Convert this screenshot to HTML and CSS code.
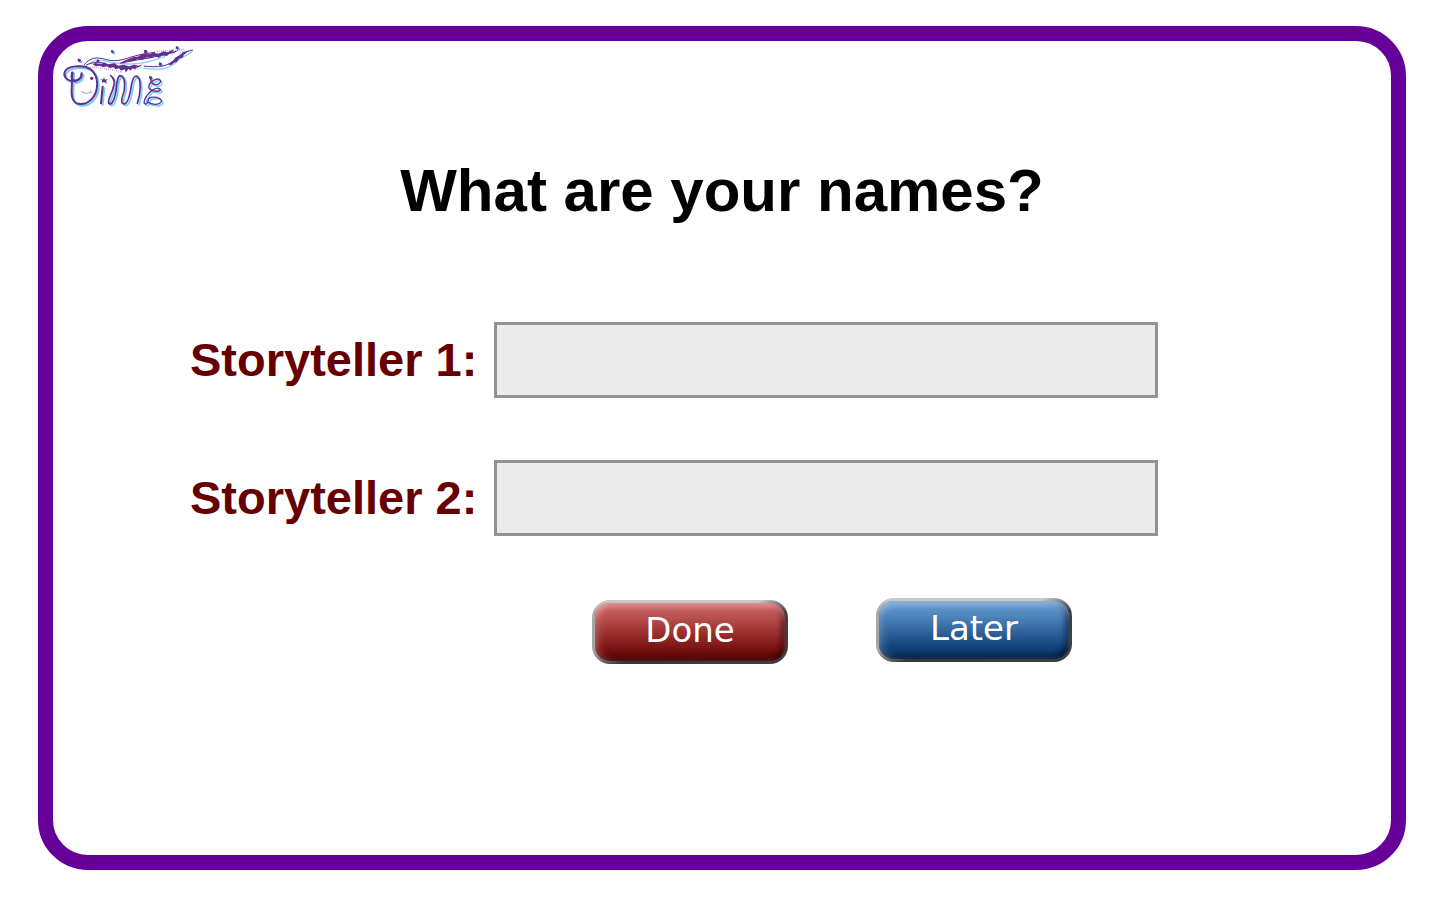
FILE: index.html
```html
<!DOCTYPE html>
<html lang="en">
<head>
<meta charset="utf-8">
<title>What are your names?</title>
<link rel="stylesheet" href="styles.css">
</head>
<body>
<main class="frame">
  <header class="brand">
    <svg class="logo" viewBox="0 3 435 216" role="img" aria-label="Dime">
      <defs>
        <g id="letters" fill="none" stroke-linecap="round" stroke-linejoin="round">
          <path stroke-width="7" d="M52 98 C48 112 50 124 62 122 C74 120 80 112 80 100"/>
          <path stroke-width="6" d="M62 124 C42 124 28 116 28 102 C29 84 52 77 78 79 C112 81 129 105 126 140 C124 168 103 192 78 192 C54 193 49 172 50 150 L52 98"/>
          <path stroke-width="6" d="M143 140 L138 190"/>
          <path stroke-width="5" d="M167 107 C181 116 180 132 172 152 C163 174 156 190 164 192 C174 194 180 170 183 154 C186 130 186 108 196 107 C212 108 212 146 203 168 C197 184 200 192 208 192 C220 190 224 166 227 150 C230 126 234 108 244 108 C260 112 258 160 247 190"/>
          <path stroke-width="4" d="M287 113 C286 130 296 136 308 133 C324 126 316 114 302 118 C284 124 276 142 286 149 C300 156 320 156 315 147 C306 138 284 154 275 168 C264 184 266 194 274 192 C284 186 274 175 288 172 C308 169 324 178 318 187 C310 196 290 194 278 186"/>
        </g>
        <g id="dots">
          <path d="M70 55 L79 60 L75 67 L67 62Z M169 30 L177 32 L175 40 L167 37Z M267 30 L276 30 L276 38 L268 40Z M363 18 L371 21 L370 28 L362 26Z M126 58 L134 61 L131 68 L124 66Z M312 67 L321 69 L318 78 L311 76Z M283 107 L292 110 L290 118 L282 116Z"/>
        </g>
      </defs>
      <use href="#letters" x="5" y="5" stroke="#72cef5"/>
      <use href="#dots" x="4" y="4" fill="#72cef5"/>
      <path class="shade" d="M90 80 Q120 53 152 63 T230 72 T330 49 M265 84 C325 94 350 83 373 58 L412 35"/>
      <use href="#letters" stroke="#642b91"/>
      <use href="#dots" fill="#642b91"/>
      <path class="ink" d="M87 75 C105 53 123 50 151 58 C173 65 202 62 225 52 L263 42 L300 37 M94 75 C119 64 135 66 154 71 M195 70 Q229 62 283 54 L330 44 M266 78 C310 83 340 80 362 57 C376 42 391 35 414 30"/>
      <path class="lock" d="M112 72 L122 69 L134 72 L148 68 L160 73 L178 70 L190 77 L206 74 L222 79 L238 74 L250 77 L264 73 L252 81 L244 83 L240 88 L232 85 L227 92 L221 87 L212 97 L209 88 L198 92 L192 85 L182 88 L176 82 L164 84 L156 79 L144 82 L136 77 L122 79Z"/>
      <path class="lock" d="M196 68 L220 57 L236 51 L248 50 L262 42 L280 43 L296 38 L310 41 L326 34 L338 37 L356 28 L352 35 L372 30 L358 39 L342 42 L336 48 L322 46 L312 53 L298 49 L288 55 L276 52 L262 60 L248 57 L236 64 L218 64 L208 70Z"/>
      <path class="lock" d="M338 73 L354 62 L362 52 L376 46 L384 37 L400 34 L386 45 L384 52 L372 56 L366 65 L356 69 L348 76Z"/>
      <path class="wisps" d="M106 80 L140 85 L180 91 L205 98 M240 89 L262 80 M300 35 L340 31 L390 29 M376 38 L410 29"/>
      <circle cx="110" cy="115" r="5" fill="#642b91"/>
      <path class="smile" d="M78 155 Q93 164 109 157 L107 152"/>
      <path fill="#642b91" d="M147 112 L150 119 L158 117 L153 124 L156 131 L147 126 L140 129 L142 122 L136 116 L144 119Z"/>
    </svg>
  </header>
  <h1 class="title">What are your names?</h1>
  <form class="names">
    <div class="field">
      <label class="label" for="teller-1">Storyteller 1:</label>
      <input class="entry" id="teller-1" type="text">
    </div>
    <div class="field">
      <label class="label" for="teller-2">Storyteller 2:</label>
      <input class="entry" id="teller-2" type="text">
    </div>
    <div class="actions">
      <button class="button done" type="submit">Done</button>
      <button class="button later" type="button">Later</button>
    </div>
  </form>
</main>
</body>
</html>
```
FILE: styles.css
```css
* { box-sizing: border-box; }

body {
  display: flex;
  min-height: 100vh;
  margin: 0;
  padding: 26px 34px 30px 38px;
  background: #fff;
  font-family: "Liberation Sans", Arial, sans-serif;
}

.frame {
  flex: 1;
  border: 15px solid #660099;
  border-radius: 50px;
  background: #fff;
}

.brand { padding-left: 2px; }

.logo {
  display: block;
  width: 145px;
  height: 72px;
}

.shade { fill: none; stroke: #8ad5f5; stroke-width: 4; }
.ink { fill: none; stroke: #642b91; stroke-width: 3; }
.lock { fill: #642b91; }
.wisps { fill: none; stroke: #642b91; stroke-width: 4; stroke-dasharray: 2 4 3 3; opacity: 0.5; }
.smile { fill: none; stroke: #8a5cad; stroke-width: 2; }

.title {
  margin: 42px 0 0;
  font-size: 60px;
  line-height: 72px;
  text-align: center;
}

.names {
  display: flex;
  flex-direction: column;
  gap: 62px;
  max-width: 1064px;
  margin: 95px auto 0;
  padding-right: 96px;
}

.field {
  display: flex;
  align-items: center;
  gap: 14px;
}

.label {
  width: 290px;
  padding-bottom: 2px;
  color: #660000;
  font-size: 47px;
  font-weight: bold;
  white-space: nowrap;
}

.entry {
  flex: 1;
  min-width: 0;
  height: 76px;
  padding: 0 16px;
  border: 3px solid #939393;
  border-radius: 0;
  background: #ebebeb;
  font: 40px "Liberation Sans", Arial, sans-serif;
}

.actions {
  display: flex;
  align-items: flex-start;
  gap: 88px;
  padding-left: 402px;
}

.button {
  --rim: conic-gradient(#c8c8c8 66deg, #404043 78deg, #38383b 246deg, #a5a5a5 258deg, #a5a5a5 280deg, #c8c8c8 290deg) border-box;
  width: 196px;
  height: 64px;
  padding: 0 0 4px;
  border: 3px solid transparent;
  border-radius: 18px;
  color: #fff;
  font: 34px "DejaVu Sans", Verdana, sans-serif;
}

.done {
  margin-top: 2px;
  background: linear-gradient(#c96060, #b95050 25%, #771010 80%, #650505) padding-box, var(--rim);
  box-shadow: inset 0 6px 6px -2px rgba(255, 190, 190, 0.6), inset 5px 0 8px -2px rgba(230, 130, 130, 0.5), inset -5px 0 6px -2px rgba(40, 0, 0, 0.7), inset 0 -5px 6px -2px rgba(40, 0, 0, 0.8);
}

.later {
  background: linear-gradient(#659bd0, #4f86bd 25%, #11427a 80%, #07366b) padding-box, var(--rim);
  box-shadow: inset 0 6px 6px -2px rgba(180, 210, 240, 0.6), inset 5px 0 8px -2px rgba(130, 170, 215, 0.5), inset -5px 0 6px -2px rgba(0, 15, 35, 0.7), inset 0 -5px 6px -2px rgba(0, 10, 30, 0.8);
}
```
